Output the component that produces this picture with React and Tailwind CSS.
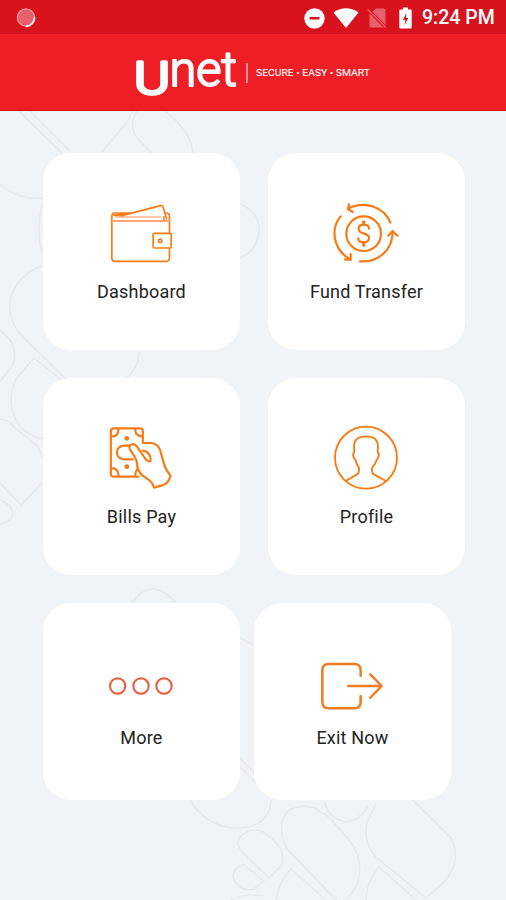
const ORANGE = "#f87a14";

function Icon({ viewBox, stroke = ORANGE, strokeWidth = 6.5, children }) {
  return (
    <svg
      width="71"
      height="70"
      viewBox={viewBox}
      fill="none"
      stroke={stroke}
      strokeWidth={strokeWidth}
      strokeLinecap="round"
      strokeLinejoin="round"
    >
      {children}
    </svg>
  );
}

function WalletIcon() {
  return (
    <Icon viewBox="48.5 26 213 210" strokeWidth={5}>
      <path d="M239 127V78q0-10-10-10M239 174v30q0 9-10 9H76q-10 0-10-10V78q0-10 10-10h44" />
      <path d="M68 92h170" stroke="#f9a873" strokeWidth="6" />
      <path d="M78 80h134" stroke="#f8b48c" strokeWidth="5" />
      <path d="M72 75q20-5 48-5L212 46q6-2 8 4l10 36" />
      <path d="M78 74l38-2-18 6z" fill={ORANGE} strokeWidth="2" />
      <path d="M222 78v12" strokeWidth="4" />
      <rect x="190" y="129" width="54" height="44" rx="3" />
      <circle cx="211" cy="151" r="5" strokeWidth="5" />
    </Icon>
  );
}

function TransferIcon() {
  return (
    <Icon viewBox="94 26 213 210">
      <circle cx="192" cy="130" r="52" />
      <path d="M208 115v-3q-3-9-16-9-15 0-15 13 0 9 15 13 16 4 16 14 0 13-16 13-13 0-16-9v-3" />
      <path d="M192 94v8M192 157v8" strokeWidth="9" />
      <path d="M272 97C254 50 194 29 145 55M148 42l-3 14 14 9" />
      <path d="M123 78C91 116 101 178 151 207M153 191v18l-17-2" />
      <path d="M181 213c57 4 98-36 98-89M266 136l13-14 14 14" />
    </Icon>
  );
}

function BillsIcon() {
  return (
    <Icon viewBox="48.5 26 213 210">
      <path d="M159 82V48q0-9-9-9H72q-9 0-9 9v127q0 9 9 9h74" />
      <path d="M64 64q22 0 22-23M136 41q0 22 22 22M64 158q22 0 22 24M145 158q-8 8-9 24" />
      <circle cx="111" cy="69" r="4" fill={ORANGE} />
      <circle cx="111" cy="154" r="4" fill={ORANGE} />
      <path d="M119 91h-16c-29 0-29 41 0 41h26" />
      <path d="M160 83h25q21 4 26 22l13 45q4 13 18 31-5 22-24 29-14 3-25 7-5-17-21-27-27-14-30-39c2-23-16-37-22-50-6-14 12-20 21-8l22 32c4 10 18 17 19 11 3-12-6-28-23-30" />
    </Icon>
  );
}

function ProfileIcon() {
  return (
    <Icon viewBox="63 27 213 210" strokeWidth={5.5}>
      <circle cx="168" cy="128" r="93" />
      <path d="M107 198l33-19q7-4 7-11v-9q-9-13-11-25-6-4-7-15l4-9-1-15c0-20 11-31 36-31s36 11 36 31l-1 15 4 9q-1 11-7 15-2 12-14 25v9q0 7 7 11l35 19" />
    </Icon>
  );
}

function MoreIcon() {
  return (
    <Icon viewBox="48 27 213 210" stroke="#ee5a38" strokeWidth={6}>
      <circle cx="83" cy="138" r="23" />
      <circle cx="153" cy="138" r="23" />
      <circle cx="222" cy="138" r="23" />
    </Icon>
  );
}

function ExitIcon() {
  return (
    <Icon viewBox="51 27 213 210" strokeWidth={7.5} stroke="#f07c22">
      <path d="M182 107V91q0-19-19-19H86q-19 0-19 19v95q0 19 19 19h77q19 0 19-19v-17" />
      <path d="M145 138h99M211 103l34 35-34 35" />
    </Icon>
  );
}

const rows = [
  [
    { label: "Dashboard", icon: WalletIcon },
    { label: "Fund Transfer", icon: TransferIcon },
  ],
  [
    { label: "Bills Pay", icon: BillsIcon },
    { label: "Profile", icon: ProfileIcon },
  ],
  [
    { label: "More", icon: MoreIcon },
    { label: "Exit Now", icon: ExitIcon },
  ],
];

function MenuCard({ label, icon: CardIcon, compact }) {
  return (
    <button
      className={`flex h-[197px] w-[197px] flex-col items-center rounded-[28px] bg-white pt-[46px] ${
        compact ? "gap-[7px]" : "gap-[11px]"
      }`}
    >
      <CardIcon />
      <span className="text-[18px] leading-6 tracking-[0.2px] whitespace-nowrap text-[#222]">
        {label}
      </span>
    </button>
  );
}

function StatusBar() {
  return (
    <div className="flex h-[34px] items-center justify-between bg-[#d8121d] pt-0.5 pr-[11px] pl-4">
      <svg width="20" height="20" viewBox="0 0 20 20">
        <circle cx="10" cy="9.5" r="9" fill="#e5606a" />
        <circle cx="10" cy="9.5" r="8.6" fill="none" stroke="#ee9297" strokeWidth="1.4" />
        <path
          d="M18.5 10a8.7 8.7 0 0 1-8 8.3"
          fill="none"
          stroke="#fff"
          strokeWidth="1.8"
          strokeLinecap="round"
        />
      </svg>
      <div className="flex items-center">
        {/* Do not disturb */}
        <svg width="21" height="21" viewBox="0 0 21 21">
          <circle cx="10.5" cy="10.5" r="10.2" fill="#fff" />
          <path d="M5.5 10.2h10" stroke="#d8121d" strokeWidth="2.6" />
        </svg>
        {/* Wifi */}
        <svg className="ml-2" width="26" height="20" viewBox="0 0 26 20">
          <path d="M.5 4.5Q13-3.8 25.5 4.5L13 20z" fill="#fff" />
        </svg>
        {/* No sim */}
        <svg className="ml-2" width="20" height="20" viewBox="0 0 20 20">
          <path
            d="M9 .5h8q1.5 0 1.5 1.5v15L5.5 3.8zM3 6l13.5 13.5H4q-1.5 0-1.5-1.5V6z"
            fill="#e5606a"
          />
          <path d="M.8 1.5l18 18" stroke="#e5606a" strokeWidth="1.4" />
        </svg>
        {/* Battery */}
        <svg className="ml-3" width="13" height="22" viewBox="0 0 13 22">
          <path
            d="M4 .5h5v2h2.5q1.2 0 1.2 1.2v16.6q0 1.2-1.2 1.2h-10Q.3 21.5.3 20.3V3.7Q.3 2.5 1.5 2.5H4z"
            fill="#fff"
          />
          <path d="M7.5 6L3.8 12.8h2.6L5.6 18l3.7-7H6.9z" fill="#d8121d" />
        </svg>
        <span className="ml-[10px] w-[73px] text-[19.5px] leading-8 font-medium whitespace-nowrap text-white">
          9:24 PM
        </span>
      </div>
    </div>
  );
}

function Header() {
  return (
    <header className="flex h-[77px] items-start justify-center border-b border-[#d8121d] bg-[#ee1e26]">
      <svg
        width="240"
        height="76"
        viewBox="133 34 240 76"
        fill="#fff"
        stroke="#fff"
        strokeLinejoin="round"
        fontFamily="Roboto, sans-serif"
      >
        <text
          x="134"
          y="93.5"
          fontSize="45"
          fontWeight="300"
          strokeWidth="3.6"
          textLength="36"
          lengthAdjust="spacingAndGlyphs"
        >
          U
        </text>
        <text
          x="169.5"
          y="86"
          fontSize="49"
          fontWeight="300"
          strokeWidth="2"
          textLength="67.5"
          lengthAdjust="spacingAndGlyphs"
        >
          net
        </text>
        <path d="M247 63v20" strokeWidth="1.2" opacity="0.8" />
        <text
          x="256"
          y="76"
          fontSize="9.8"
          strokeWidth="0.1"
          textLength="114"
          lengthAdjust="spacingAndGlyphs"
        >
          SECURE • EASY • SMART
        </text>
      </svg>
    </header>
  );
}

function Pattern() {
  return (
    <svg
      className="absolute inset-0"
      width="506"
      height="789"
      viewBox="0 111 506 789"
      fill="none"
      stroke="#e5eaed"
      strokeWidth="1.5"
    >
      {/* top left */}
      <path d="M19 111l47 46M30 111l40 40M0 184q18 16 43 14M132 111q-2 7-7 14l-26 30" />
      <path d="M137 111q-10 15 2 29l16 16M165 111q28 22 28 44" />
      <path d="M240 204q20 8 19 27t-19 27M42 205q-6 24 0 50" />
      <path d="M42 266q-24 8-32 33-2 25 15 40l41 40M0 331q15 9 15 26-1 9-15 24" />
      <path d="M34 358L16 379q-12 26 5 49 10 9 23 11M34 358l26 21" />
      <path d="M0 419q8 0 14 8l24 20q4 8 4 10M43 482l-22 23L0 483M0 500q12 5 13 14-1 8-13 10M139 351q1 15-13 28" />
      <path d="M132 604q7-14 22-15 11 1 23 15" />
      {/* bottom right */}
      <path d="M240 638l14 7M240 758l22 23M240 767l17 17" />
      <path d="M190 800q14 24 42 28 38 1 39-28" />
      <path d="M288 811q10-7 27-3l14 9 20 23q15 18 9 41-2 10-17 24L286 848q-10-25 2-37z" />
      <path d="M325 802q3 17 21 20 11 0 22-15M376 804l-9 18q-4 22 10 36l49 40 20-18q16-22 5-42l-40-40q-17-8-29 0" />
      <path d="M249 831q12-4 22 7 17 15 10 28l-12 12-26-25q-13-14 6-22z" />
      <path d="M243 864q-13 6-9 17 8 11 20 8l10-8zM230 900q15-7 35-4M276 900q3-18 15-31l35 31M366 900q0-18 13-33l37 33" />
    </svg>
  );
}

export default function App() {
  return (
    <div className="flex h-[900px] w-[506px] flex-col overflow-hidden bg-[#eff4f8] font-[Roboto,sans-serif]">
      <StatusBar />
      <Header />
      <main className="relative flex-1">
        <Pattern />
        <div className="relative flex flex-col gap-7 pt-[42px] pl-[43px]">
          {rows.map((row, i) => (
            <div key={i} className={`flex ${i === 2 ? "gap-[14px]" : "gap-7"}`}>
              {row.map((item) => (
                <MenuCard key={item.label} {...item} compact={i === 2} />
              ))}
            </div>
          ))}
        </div>
      </main>
    </div>
  );
}
